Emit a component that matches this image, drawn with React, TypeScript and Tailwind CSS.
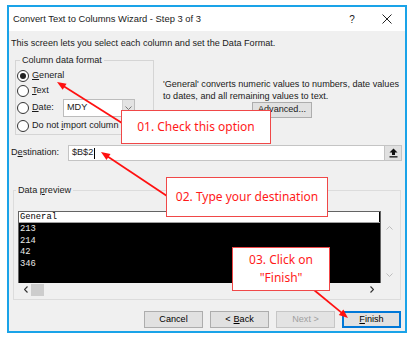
import React from "react";

function Radio({ checked, children }: { checked?: boolean; children: React.ReactNode }) {
  return (
    <div className="flex items-center h-[14px] whitespace-nowrap">
      <span className="ml-[1px] w-[12px] h-[12px] rounded-full border border-[#333333] bg-white flex items-center justify-center shrink-0">
        {checked && <span className="w-[6px] h-[6px] rounded-full bg-[#222222]" />}
      </span>
      <span className="ml-[3px]">{children}</span>
    </div>
  );
}

function Arrow({ x1, y1, x2, y2 }: { x1: number; y1: number; x2: number; y2: number }) {
  const dx = x2 - x1;
  const dy = y2 - y1;
  const len = Math.hypot(dx, dy);
  const ux = dx / len;
  const uy = dy / len;
  const L = 9;
  const W = 3.6;
  const bx = x2 - ux * L;
  const by = y2 - uy * L;
  const pts = `${x2},${y2} ${bx - uy * W},${by + ux * W} ${bx + uy * W},${by - ux * W}`;
  return (
    <g>
      <line x1={x1} y1={y1} x2={bx + ux * 1} y2={by + uy * 1} stroke="#ff1010" strokeWidth={1.7} />
      <polygon points={pts} fill="#ff1010" />
    </g>
  );
}

function Btn({ children, w, primary, disabled }: { children: React.ReactNode; w: string; primary?: boolean; disabled?: boolean }) {
  return (
    <div
      className={
        "h-[17px] flex items-center justify-center bg-[#e1e1e1] " +
        w +
        (primary ? " border-2 border-[#0078d7]" : " border border-[#adadad]") +
        (disabled ? " text-[#a0a0a0] border-[#c6c6c6] bg-[#e3e3e3]" : " text-[#000000]")
      }
    >
      {children}
    </div>
  );
}

export default function App() {
  return (
    <div className="relative w-[415px] h-[343px] bg-white overflow-hidden [font-family:'Liberation_Sans',Arial,sans-serif] text-[9.1px] text-[#1a1a1a]">
      {/* Window */}
      <div className="ml-[7px] mt-[5px] w-[400px] h-[328px] border-2 border-[#1aa3e8] flex flex-col">
        {/* Title bar */}
        <div className="h-[24px] bg-white flex items-center shrink-0">
          <span className="pl-[4px] text-[9.4px] leading-[14px]">Convert Text to Columns Wizard - Step 3 of 3</span>
          <span className="ml-auto w-[34px] text-center text-[10px]">?</span>
          <span className="w-[36px] flex justify-center">
            <svg width="10" height="10" viewBox="0 0 10 10">
              <path d="M0.5 0.5 L9.5 9.5 M9.5 0.5 L0.5 9.5" stroke="#222" strokeWidth="1" />
            </svg>
          </span>
        </div>

        {/* Body */}
        <div className="flex-1 bg-[#f0f0f0] flex flex-col">
          <div className="ml-[2px] mt-[5px] h-[14px] leading-[14px] whitespace-nowrap">
            This screen lets you select each column and set the Data Format.
          </div>

          <div className="flex mt-[3px]">
            <fieldset className="ml-[6px] w-[139px] border border-[#d5d5d5] pb-[1px]">
              <legend className="ml-[4px] px-[2px] leading-[14px]">Column data format</legend>
              <div className="mt-[2px] flex flex-col">
                <Radio checked>
                  <span className="underline">G</span>eneral
                </Radio>
                <div className="mt-[1px]">
                  <Radio>
                    <span className="underline">T</span>ext
                  </Radio>
                </div>
                <div className="mt-[1px] flex items-center h-[18px]">
                  <span className="ml-[1px] w-[12px] h-[12px] rounded-full border border-[#333333] bg-white shrink-0" />
                  <span className="ml-[3px] w-[31px]">
                    <span className="underline">D</span>ate:
                  </span>
                  <div className="w-[72px] h-[18px] bg-white border border-[#bcbcbc] flex items-center">
                    <span className="pl-[3px] flex-1">MDY</span>
                    <span className="w-[12px] h-full bg-[#e3e3e3] border-l border-[#cfcfcf] flex items-center justify-center">
                      <svg width="7" height="4" viewBox="0 0 7 4">
                        <path d="M0.5 0.5 L3.5 3.5 L6.5 0.5" fill="none" stroke="#777" strokeWidth="1" />
                      </svg>
                    </span>
                  </div>
                </div>
                <div className="mt-[2px]">
                  <Radio>
                    <span className="block w-[88px] overflow-hidden">
                      Do not <span className="underline">i</span>mport column (skip)
                    </span>
                  </Radio>
                </div>
              </div>
            </fieldset>

            <div className="ml-[9px] mt-[25px] flex flex-col">
              <div className="leading-[12px] whitespace-nowrap">'General' converts numeric values to numbers, date values</div>
              <div className="leading-[12px] whitespace-nowrap">to dates, and all remaining values to text.</div>
              <div className="ml-[89px] w-[60px] h-[16px] bg-[#e1e1e1] border border-[#adadad] flex items-center justify-center">
                <span className="underline">A</span>dvanced...
              </div>
            </div>
          </div>

          {/* Destination */}
          <div className="mt-[10px] flex items-center h-[16px]">
            <span className="ml-[2px] w-[57px] whitespace-nowrap">
              D<span className="underline">e</span>stination:
            </span>
            <div className="w-[334px] h-[16px] bg-white border border-[#c4c4c4] flex items-center">
              <span className="pl-[3px]">$B$2</span>
              <span className="ml-[1px] w-[1px] h-[11px] bg-black" />
              <span className="ml-auto w-[17px] h-[14px] bg-[#e1e1e1] border-l border-[#c4c4c4] flex items-center justify-center">
                <svg width="9" height="10" viewBox="0 0 9 10">
                  <path d="M4.5 0.5 L8.5 4.5 L6 4.5 L6 7 L3 7 L3 4.5 L0.5 4.5 Z" fill="#111" />
                  <rect x="0.5" y="8.2" width="8" height="1.3" fill="#111" />
                </svg>
              </span>
            </div>
          </div>

          {/* Data preview */}
          <fieldset className="ml-[4px] mt-[22px] w-[388px] border border-[#dcdcdc] pb-[3px]">
            <legend className="ml-[2px] px-[2px] leading-[14px]">
              Data <span className="underline">p</span>review
            </legend>
            <div className="mt-[14px] flex">
              <div className="ml-[4px] w-[363px] h-[72px] border-t border-l border-r border-[#646464] flex flex-col [font-family:'Liberation_Mono',monospace] text-[8.8px]">
                <div className="h-[11px] bg-white leading-[11px] text-[#000] pl-[1px] border-b border-[#a0a0a0] flex">
                  <span className="flex-1">General</span>
                  <span className="w-[1px] h-full bg-black" />
                </div>
                <div className="flex-1 bg-black text-[#e8e8e8] leading-[11.5px] pt-[1px] pl-[1px]">
                  <div>213</div>
                  <div>214</div>
                  <div>42</div>
                  <div>346</div>
                </div>
              </div>
              <div className="w-[17px] h-[72px] flex flex-col items-center pt-[15px]">
                <svg width="7" height="4" viewBox="0 0 7 4">
                  <path d="M0.5 3.5 L3.5 0.5 L6.5 3.5" fill="none" stroke="#bdbdbd" strokeWidth="1" />
                </svg>
                <div className="flex-1" />
                <svg className="mb-[6px]" width="7" height="4" viewBox="0 0 7 4">
                  <path d="M0.5 0.5 L3.5 3.5 L6.5 0.5" fill="none" stroke="#bdbdbd" strokeWidth="1" />
                </svg>
              </div>
            </div>
            <div className="flex items-center h-[13px]">
              <span className="ml-[8px] w-[8px] flex justify-center">
                <svg width="4" height="7" viewBox="0 0 4 7">
                  <path d="M3.5 0.5 L0.5 3.5 L3.5 6.5" fill="none" stroke="#333" strokeWidth="1.2" />
                </svg>
              </span>
              <span className="ml-[1px] w-[13px] h-[12px] bg-[#cdcdcd]" />
              <span className="ml-auto mr-[24px] w-[8px] flex justify-center">
                <svg width="4" height="7" viewBox="0 0 4 7">
                  <path d="M0.5 0.5 L3.5 3.5 L0.5 6.5" fill="none" stroke="#333" strokeWidth="1.2" />
                </svg>
              </span>
            </div>
          </fieldset>

          {/* Buttons */}
          <div className="mt-[11px] flex justify-end pr-[4px] gap-[7px]">
            <Btn w="w-[59px]">Cancel</Btn>
            <Btn w="w-[59px]">
              &lt; <span className="underline ml-[3px]">B</span>ack
            </Btn>
            <Btn w="w-[59px]" disabled>
              Next &gt;
            </Btn>
            <Btn w="w-[59px]" primary>
              <span className="underline">F</span>inish
            </Btn>
          </div>
        </div>
      </div>

      {/* Arrows */}
      <svg className="absolute left-0 top-0 pointer-events-none" width="415" height="343" viewBox="0 0 415 343">
        <Arrow x1={122} y1={123} x2={57} y2={82} />
        <Arrow x1={167} y1={196} x2={101} y2={152} />
        <Arrow x1={314} y1={290} x2={348} y2={318} />
      </svg>

      {/* Callouts */}
      <div className="absolute left-[121px] top-[110px] w-[150px] h-[34px] bg-white border-[1.5px] border-[#f04848] flex items-center justify-center text-[#ff1a1a] text-[12px] whitespace-nowrap [font-family:'Noto_Sans',sans-serif]">
        01. Check this option
      </div>
      <div className="absolute left-[166px] top-[177px] w-[162px] h-[40px] bg-white border-[1.5px] border-[#f04848] flex items-center justify-center text-[#ff1a1a] text-[12px] whitespace-nowrap [font-family:'Noto_Sans',sans-serif]">
        02. Type your destination
      </div>
      <div className="absolute left-[232px] top-[247px] w-[98px] h-[44px] bg-white border-[1.5px] border-[#f04848] flex flex-col items-center justify-center text-[#ff1a1a] text-[12px] leading-[18px] whitespace-nowrap [font-family:'Noto_Sans',sans-serif]">
        <span>03. Click on</span>
        <span>"Finish"</span>
      </div>
    </div>
  );
}
